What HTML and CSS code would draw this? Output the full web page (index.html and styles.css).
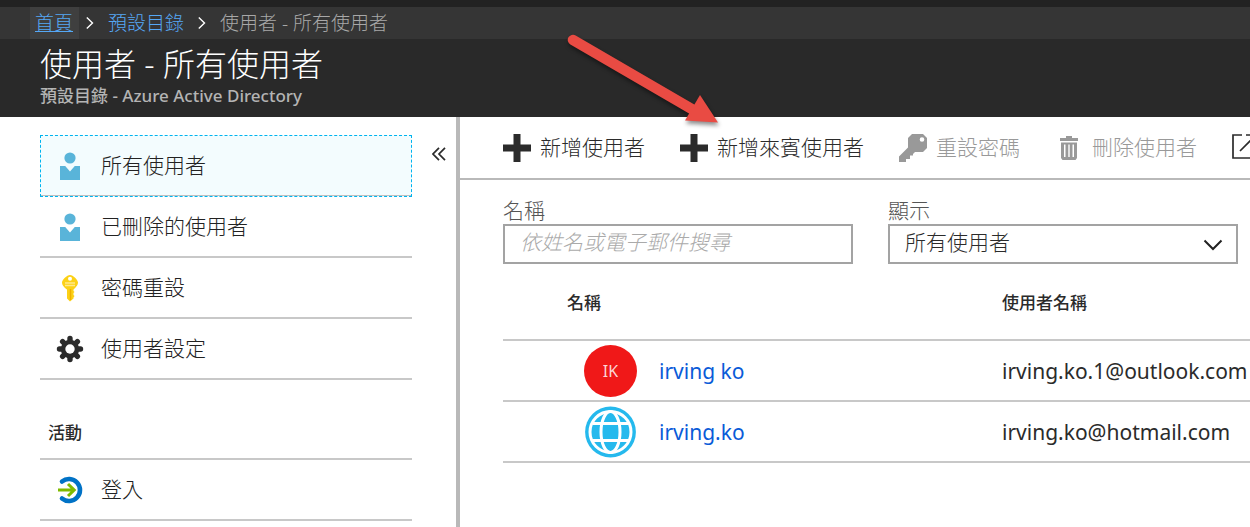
FILE: index.html
```html
<!DOCTYPE html>
<html lang="zh-Hant">
<head>
<meta charset="utf-8">
<title>使用者 - 所有使用者</title>
<meta name="viewport" content="width=device-width, initial-scale=1">
<link rel="stylesheet" href="styles.css">
</head>
<body>
<header class="top">
  <nav class="crumbs" aria-label="breadcrumb">
    <a class="crumb crumb-home" href="#">首頁</a>
    <svg class="crumb-sep" width="8" height="14" viewBox="0 0 8 14"><path d="M.8 1.500L6.500 7L.8 12.500" fill="none" stroke="#fff" stroke-width="1.400"/></svg>
    <a class="crumb" href="#">預設目錄</a>
    <svg class="crumb-sep" width="8" height="14" viewBox="0 0 8 14"><path d="M.8 1.500L6.500 7L.8 12.500" fill="none" stroke="#fff" stroke-width="1.400"/></svg>
    <span class="crumb-current">使用者 - 所有使用者</span>
  </nav>
  <div class="heading">
    <h1 class="title">使用者 - 所有使用者</h1>
    <p class="subtitle">預設目錄 - Azure Active Directory</p>
  </div>
</header>
<div class="body">
  <aside class="side">
    <nav class="menu">
      <a class="item item-active" href="#">
        <svg class="item-icon" width="28" height="28" viewBox="0 0 28 28" fill="#59b4d9"><circle cx="14" cy="6" r="5.600"/><path d="M4 14H9.200L14 19.500L18.800 14H24V28H4Z"/></svg>
        <span class="text">所有使用者</span></a>
      <a class="item" href="#">
        <svg class="item-icon" width="28" height="28" viewBox="0 0 28 28" fill="#59b4d9"><circle cx="14" cy="6" r="5.600"/><path d="M4 14H9.200L14 19.500L18.800 14H24V28H4Z"/></svg>
        <span class="text">已刪除的使用者</span></a>
      <a class="item" href="#">
        <svg class="item-icon" width="28" height="28" viewBox="0 0 28 28"><path d="M14 1C17 1 22 6 22 8.500C22 11.500 19 14 17.500 15.500V17L18.500 18L17.500 19V21L18.500 22L17.500 23.500V24.500L14 27.500L11 24.500V15.500C9 14 6 11.500 6 8.500C6 6 11 1 14 1Z" fill="#fcd116"/><circle cx="14" cy="4.800" r="2" fill="#fff"/><path d="M9 9H19M9 11.500H19" stroke="#ffe989" stroke-width="1.300"/><path d="M14.500 15V26" stroke="#f0b000" stroke-width="1.500"/></svg>
        <span class="text">密碼重設</span></a>
      <a class="item" href="#">
        <svg class="item-icon" width="28" height="28" viewBox="0 0 28 28"><g stroke="#2b2b2b" stroke-width="5.400" stroke-linecap="round"><path d="M14 3.500V24.500M3.500 14H24.500"/><path d="M6.600 6.600L21.400 21.400M21.400 6.600L6.600 21.400"/></g><circle cx="14" cy="14" r="9.200" fill="#2b2b2b"/><circle cx="14" cy="14" r="4.700" fill="#fff"/></svg>
        <span class="text">使用者設定</span></a>
      <h2 class="menu-head">活動</h2>
      <a class="item" href="#">
        <svg class="item-icon" width="28" height="28" viewBox="0 0 28 28" fill="none"><path d="M6 5.500A11 11 0 1 1 6 22.500" stroke="#0072c6" stroke-width="4.600" stroke-linecap="round"/><path d="M2 14H18M12 8L18.200 14L12 20" stroke="#7fba00" stroke-width="3"/></svg>
        <span class="text">登入</span></a>
    </nav>
    <button class="collapse" type="button" aria-label="收合">
      <svg width="14" height="14" viewBox="0 0 14 14" fill="none" stroke="#2b2b2b" stroke-width="1.700"><path d="M7 .8L1 7L7 13.200M13 .8L7 7L13 13.200"/></svg>
    </button>
  </aside>
  <main class="main">
    <div class="tools">
      <button class="tool" type="button"><svg width="28" height="28" viewBox="0 0 28 28" fill="#2b2b2b"><path d="M10.500 0H17.500V10.500H28V17.500H17.500V28H10.500V17.500H0V10.500H10.500Z"/></svg><span class="text">新增使用者</span></button>
      <button class="tool" type="button"><svg width="28" height="28" viewBox="0 0 28 28" fill="#2b2b2b"><path d="M10.500 0H17.500V10.500H28V17.500H17.500V28H10.500V17.500H0V10.500H10.500Z"/></svg><span class="text">新增來賓使用者</span></button>
      <button class="tool" type="button" disabled><svg width="28" height="28" viewBox="0 0 28 28" fill="#999"><path fill-rule="evenodd" d="M13 0H24L28 4V14L24 18H16L14 20V21.500H11V25H7V28H0V22.500L9 13.500V4ZM23 3.200A2.300 2.300 0 1 0 23 7.800A2.300 2.300 0 1 0 23 3.200Z"/></svg><span class="text">重設密碼</span></button>
      <button class="tool tool-delete" type="button" disabled><svg width="20" height="26" viewBox="0 0 20 26" fill="#999"><path d="M7 1H13V3H19V6H1V3H7Z"/><path fill-rule="evenodd" d="M2 7.500H18V23L16.500 25H3.500L2 23ZM5 9.500V22H6.500V9.500ZM9.300 9.500V22H10.700V9.500ZM13.500 9.500V22H15V9.500Z"/></svg><span class="text">刪除使用者</span></button>
      <button class="tool" type="button" aria-label="在新視窗開啟"><svg width="28" height="28" viewBox="0 0 28 28" fill="none" stroke="#2b2b2b" stroke-width="1.700"><path d="M10 1H1V24H24V15M14 1H26V13M8 17L24 1"/></svg></button>
    </div>
    <div class="filters">
      <div class="field">
        <label for="name">名稱</label>
        <input class="box" id="name" type="text" placeholder="依姓名或電子郵件搜尋">
      </div>
      <div class="field">
        <label for="show">顯示</label>
        <div class="pick">
          <select class="box" id="show"><option>所有使用者</option></select>
          <svg class="pick-arrow" width="20" height="12" viewBox="0 0 20 12"><path d="M1.500 1.500L10 10L18.500 1.500" fill="none" stroke="#222" stroke-width="2"/></svg>
        </div>
      </div>
    </div>
    <table class="users">
      <thead><tr><th class="col-name" scope="col">名稱</th><th scope="col">使用者名稱</th></tr></thead>
      <tbody>
        <tr>
          <td><div class="person"><span class="avatar">IK</span><a href="#">irving ko</a></div></td>
          <td>irving.ko.1@outlook.com</td>
        </tr>
        <tr>
          <td><div class="person"><svg class="globe" width="53" height="52" viewBox="0 0 53 52" fill="none"><circle cx="26.500" cy="26" r="25.400" fill="#25b9ed"/><circle cx="26.500" cy="26" r="20.500" stroke="#fff" stroke-width="3"/><ellipse cx="26.500" cy="26" rx="9.500" ry="20.500" stroke="#fff" stroke-width="3"/><path d="M8.500 17.500H44.500M8.500 34.500H44.500" stroke="#fff" stroke-width="3"/></svg><a href="#">irving.ko</a></div></td>
          <td>irving.ko@hotmail.com</td>
        </tr>
      </tbody>
    </table>
  </main>
</div>
<svg class="pointer" width="160" height="100" viewBox="0 0 160 100"><g fill="#e94b43"><path d="M8 10L131 81.500" stroke="#e94b43" stroke-width="10.500" stroke-linecap="round"/><path d="M135 65L153 92.500L120 90.500Z"/></g></svg>
</body>
</html>
```
FILE: styles.css
```css
* { box-sizing: border-box; }

body {
  margin: 0;
  min-height: 100vh;
  display: flex;
  flex-direction: column;
  position: relative;
  overflow: hidden;
  background: #fff;
  color: #2b2b2b;
  font-family: "Noto Sans", "Noto Sans CJK TC", sans-serif;
  font-size: 21px;
  font-weight: 300;
}

button, input, select { font: inherit; color: inherit; }
a { text-decoration: none; }

.top {
  border-top: 7px solid #222;
  background: #292929;
}

.crumbs {
  display: flex;
  align-items: center;
  gap: 14px;
  height: 32px;
  padding-left: 30px;
  background: #353535;
  font-size: 19px;
  line-height: 32px;
}

.crumb { color: #55a8f5; }
.crumb-home {
  margin-right: -7px;
  padding: 0 6px 0 5px;
  background: #3f3f3f;
  text-decoration: underline;
}
.crumb-current { color: #a8a8a8; }

.heading {
  padding: 5px 40px 10px;
}
.title {
  margin: 0;
  color: #fff;
  font-size: 32px;
  font-weight: 300;
  line-height: 40px;
}
.subtitle {
  margin: 0;
  color: #b4b4b4;
  font-size: 17px;
  font-weight: 500;
  line-height: 23px;
}

.body {
  flex: 1;
  display: flex;
}

.side {
  flex: none;
  width: 460px;
  display: flex;
  align-items: flex-start;
  gap: 15px;
  padding: 18px 5px 0 40px;
  border-right: 4px solid #b9b9b9;
}
.menu { width: 372px; }

.item {
  display: flex;
  align-items: center;
  gap: 17px;
  height: 61px;
  padding-left: 16px;
  border-bottom: 2px solid #c8c8c8;
  color: #222;
}
.item-active {
  height: 62px;
  border: 1px dashed #00b4ef;
  padding-left: 15px;
  background: #f3fcfe;
  box-shadow: inset 0 -1px #c0c0c0;
}
.text {
  padding-bottom: 4px;
}

.menu-head {
  display: flex;
  align-items: center;
  height: 80px;
  margin: 0;
  padding: 25px 8px 0;
  border-bottom: 2px solid #c8c8c8;
  font-size: 17px;
  font-weight: 500;
}

.collapse {
  display: flex;
  margin-top: 12px;
  padding: 0 5px;
  border: 0;
  background: none;
}

.main {
  flex: 1;
  min-width: 0;
}

.tools {
  display: flex;
  align-items: center;
  gap: 35px;
  height: 63px;
  padding-left: 43px;
  border-bottom: 2px solid #b9b9b9;
  overflow: hidden;
}
.tool {
  flex: none;
  display: flex;
  align-items: center;
  gap: 9px;
  padding: 0;
  border: 0;
  background: none;
}
.tool:disabled { color: #999; }
.tool-delete {
  gap: 13px;
  padding-left: 4px;
}

.filters {
  display: flex;
  gap: 35px;
  padding: 18px 12px 0 43px;
}
.field {
  flex: 1;
  min-width: 0;
  color: #555;
}
.field label {
  display: block;
  padding-bottom: 2px;
  line-height: 24px;
}
.box {
  display: block;
  width: 100%;
  height: 40px;
  padding: 0 15px 5px;
  border: 2px solid #a3a3a3;
  border-radius: 0;
  background: #fff;
  color: #2b2b2b;
  appearance: none;
}
.box::placeholder {
  color: #aaa;
  font-style: italic;
  opacity: 1;
}
.pick { position: relative; }
.pick-arrow {
  position: absolute;
  top: 15px;
  right: 15px;
  pointer-events: none;
}

.users {
  width: calc(100% - 43px);
  margin-left: 43px;
  border-collapse: collapse;
  table-layout: fixed;
}
.users th,
.users td {
  padding: 0;
  border-bottom: 2px solid #c8c8c8;
  text-align: left;
  white-space: nowrap;
}
.users th {
  height: 76px;
  font-size: 17px;
  font-weight: 500;
}
.users .col-name {
  width: 499px;
  padding-left: 64px;
}
.users td {
  height: 61px;
  font-weight: 400;
}
.person {
  display: flex;
  align-items: center;
  gap: 22px;
  padding-left: 81px;
}
.person a { color: #0a5bd8; }
.avatar {
  display: flex;
  align-items: center;
  justify-content: center;
  width: 53px;
  height: 52px;
  border-radius: 50%;
  background: #f01818;
  color: #fcd5d5;
  font-size: 16px;
}

.pointer {
  position: absolute;
  top: 30px;
  left: 565px;
  pointer-events: none;
  filter: drop-shadow(1px 3px 2px rgba(0, 0, 0, .45));
}
```
